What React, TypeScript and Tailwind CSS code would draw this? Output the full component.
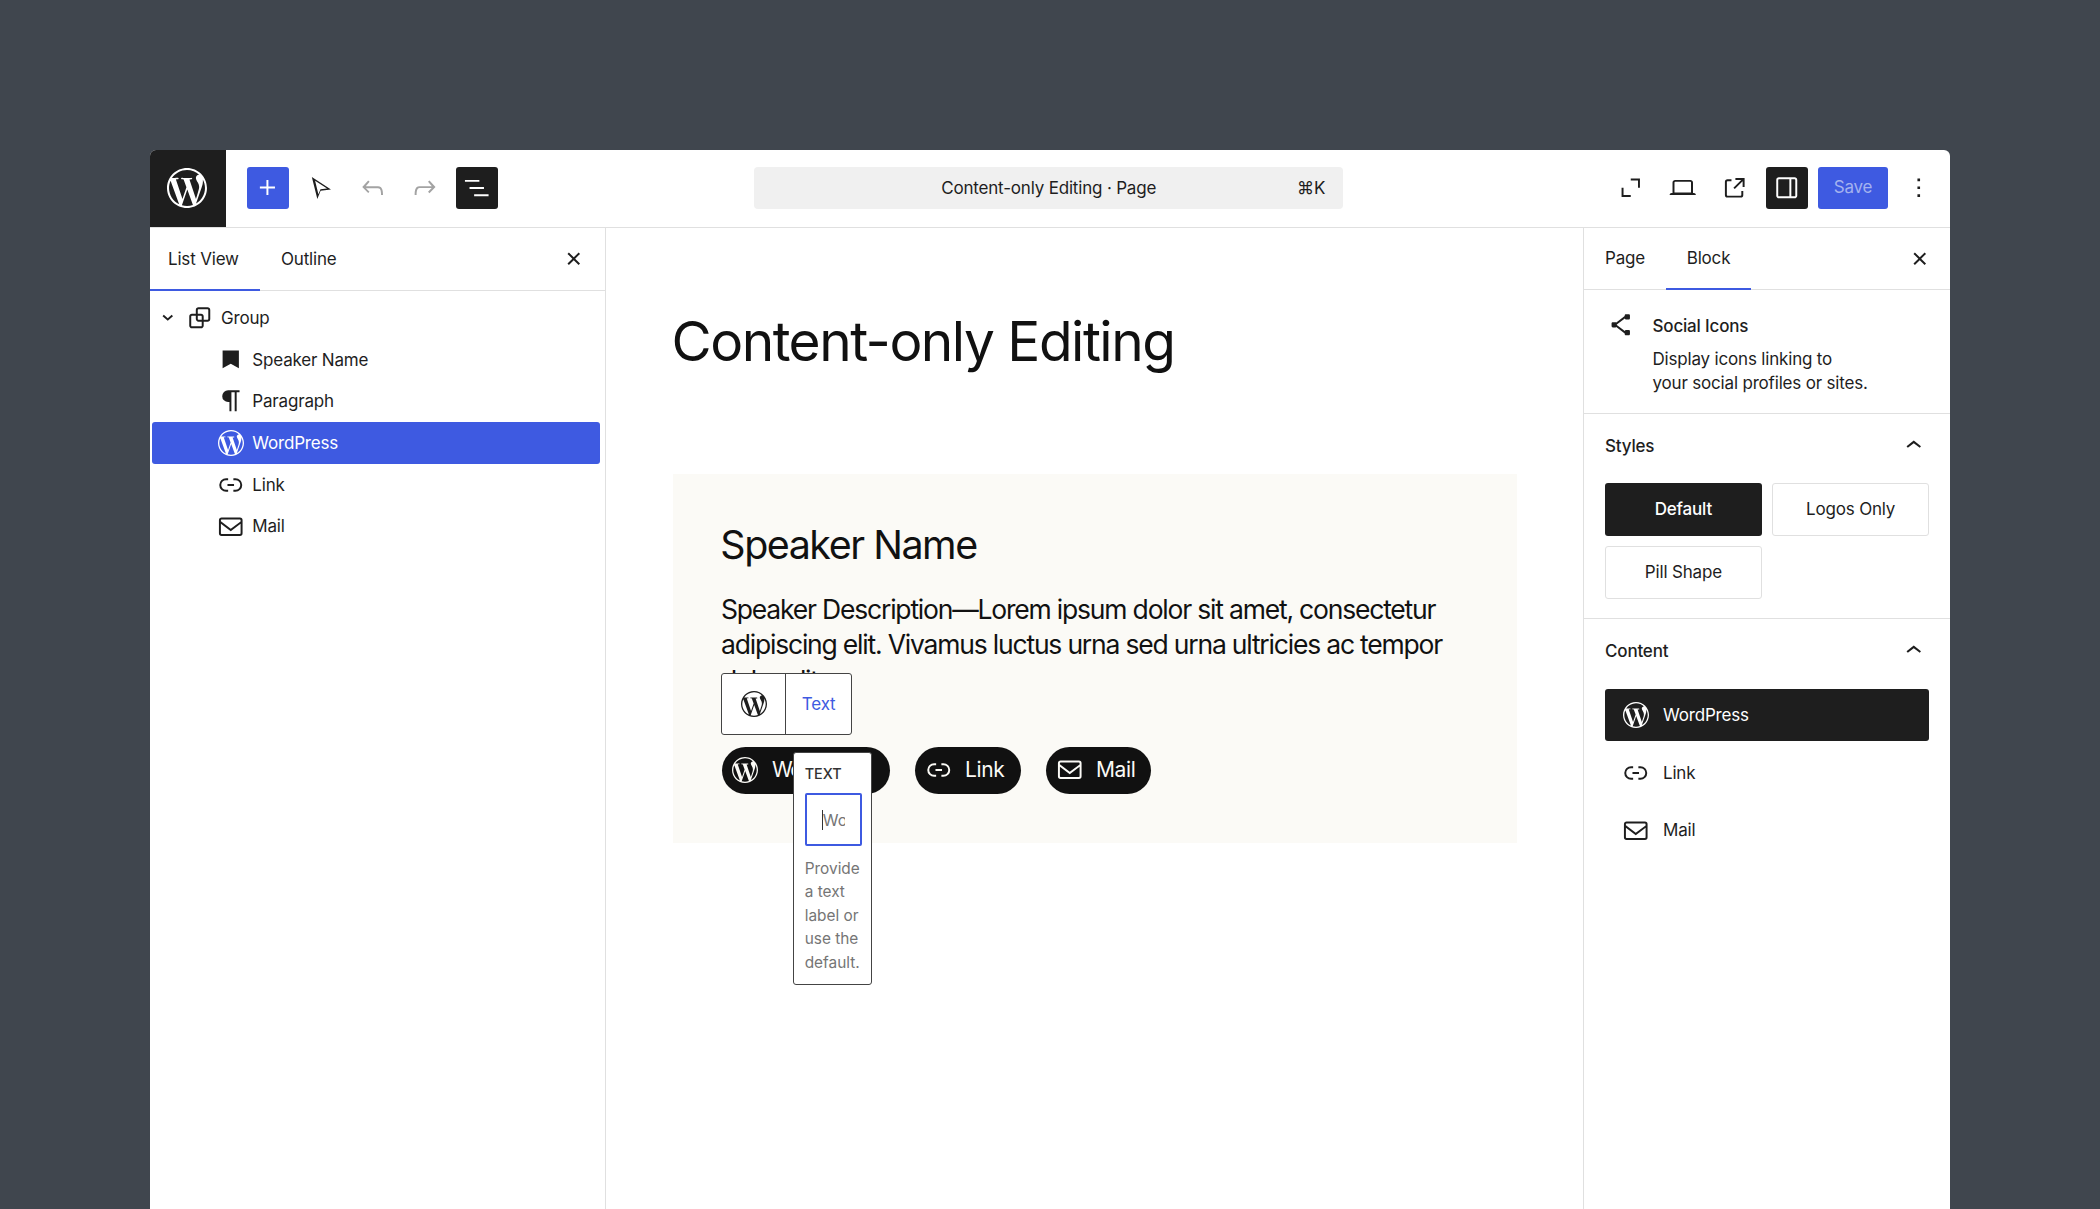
import React from "react";
import { SiWordpress } from "react-icons/si";

type IconProps = { d: string; className?: string };
const Icon = ({ d, className = "" }: IconProps) => (
  <svg viewBox="0 0 24 24" fill="currentColor" fillRule="evenodd" className={`w-[31.5px] h-[31.5px] shrink-0 ${className}`}>
    <path d={d} />
  </svg>
);

const P = {
  plus: "M11 12.5V17.5H12.5V12.5H17.5V11H12.5V6H11V11H6V12.5H11Z",
  cursor: "M9.4 20.5L5.2 3.8l14.6 9.5-7.9 1-2.5 6.2zM7.7 6.7l2.5 10.2 1.6-3.8 5-.6-9.1-5.8z",
  undo: "M18.3 11.7c-.6-.6-1.4-.9-2.3-.9H6.7l2.9-3.3-1.1-1-4.5 5L8.5 16l1-1-2.7-2.7H16c.5 0 .9.2 1.3.5 1 1 1 3.4 1 4.5v.3h1.5v-.2c0-1.5 0-4.3-1.5-5.7z",
  redo: "M15.6 6.5l-1.1 1 2.9 3.3H8c-.9 0-1.7.3-2.3.9-1.4 1.5-1.4 4.2-1.4 5.6v.2h1.5v-.3c0-1.1 0-3.5 1-4.5.3-.3.7-.5 1.3-.5h9.2L14.5 15l1.1 1.1 4.6-4.6-4.6-5z",
  list: "M3 6h11v1.5H3V6Zm3.5 5.5h11V13h-11v-1.5ZM21 17H10v1.5h11V17Z",
  close: "M12 13.06l3.712 3.713 1.061-1.06L13.061 12l3.712-3.712-1.06-1.06L12 10.938 8.288 7.227l-1.061 1.06L10.939 12l-3.712 3.712 1.06 1.061L12 13.061z",
  full: "M5 12h1.5v5.5H12V19H5v-7Z M19 12h-1.5V6.5H12V5h7v7Z",
  desktop: "M20.5 16h-.7V8c0-1.1-.9-2-2-2H6.2c-1.1 0-2 .9-2 2v8h-.7c-.8 0-1.5.7-1.5 1.5h20c0-.8-.7-1.5-1.5-1.5zM5.7 8c0-.3.2-.5.5-.5h11.6c.3 0 .5.2.5.5v7.6H5.7V8z",
  external: "M19.5 4.5h-7V6h4.44l-5.97 5.97 1.06 1.06L18 7.06v4.44h1.5v-7Zm-13 1a2 2 0 0 0-2 2v10a2 2 0 0 0 2 2h10a2 2 0 0 0 2-2v-3H17v3a.5.5 0 0 1-.5.5h-10a.5.5 0 0 1-.5-.5v-10a.5.5 0 0 1 .5-.5h3V5.5h-3Z",
  sidebar: "M18 4H6c-1.1 0-2 .9-2 2v12c0 1.1.9 2 2 2h12c1.1 0 2-.9 2-2V6c0-1.1-.9-2-2-2zm-4 14.5H6c-.3 0-.5-.2-.5-.5V6c0-.3.2-.5.5-.5h8v13zm4.5-.5c0 .3-.2.5-.5.5h-2.5v-13H18c.3 0 .5.2.5.5v12z",
  more: "M13 19h-2v-2h2v2zm0-6h-2v-2h2v2zm0-6h-2V5h2v2z",
  chevDown: "m15.99 10.889-3.988 3.418-3.988-3.418.976-1.14 3.012 2.582 3.012-2.581.976 1.139Z",
  chevUp: "M6.5 12.4L12 8l5.5 4.4-.9 1.2L12 10l-4.5 3.6-1-1.2z",
  group: "M18 4h-7c-1.1 0-2 .9-2 2v3H6c-1.1 0-2 .9-2 2v7c0 1.1.9 2 2 2h7c1.1 0 2-.9 2-2v-3h3c1.1 0 2-.7 2-2V6c0-1.1-.9-2-2-2zm-4.5 14c0 .3-.2.5-.5.5H6c-.3 0-.5-.2-.5-.5v-7c0-.3.2-.5.5-.5h3V13c0 1.1.9 2 2 2h2.5v3zm0-4.5H11c-.3 0-.5-.2-.5-.5v-2.5H13c.3 0 .5.2.5.5v2.5zm5-.5c0 .3-.2.5-.5.5h-3V11c0-1.1-.9-2-2-2h-2.5V6c0-.3.2-.5.5-.5h7c.3 0 .5.2.5.5v7z",
  bookmark: "M5.8 5h12.4v13.5L12 15l-6.2 3.5Z",
  para: "M10 4h8.7v1.5H16.5V20H15V5.5h-2.5V20H11v-7H10a4.5 4.5 0 0 1 0-9Z",
  link: "M10 17.389H8.444A5.194 5.194 0 1 1 8.444 7H10v1.5H8.444a3.694 3.694 0 0 0 0 7.389H10v1.5ZM14 7h1.556a5.194 5.194 0 0 1 0 10.39H14v-1.5h1.556a3.694 3.694 0 0 0 0-7.39H14V7Zm-4.5 6h5v-1.5h-5V13Z",
  mail: "M3 7c0-1.1.9-2 2-2h14a2 2 0 0 1 2 2v10a2 2 0 0 1-2 2H5a2 2 0 0 1-2-2V7Zm2-.5h14c.3 0 .5.2.5.5v1L12 13.5 4.5 7.9V7c0-.3.2-.5.5-.5Zm-.5 3.3V17c0 .3.2.5.5.5h14c.3 0 .5-.2.5-.5V9.8L12 15.4 4.5 9.8Z",
  share: "M9 11.8l6.1-4.5c.1.4.4.7.9.7h2c.6 0 1-.4 1-1V5c0-.6-.4-1-1-1h-2c-.6 0-1 .4-1 1v.4l-6.4 4.8c-.2-.1-.4-.2-.6-.2H6c-.6 0-1 .4-1 1v2c0 .6.4 1 1 1h2c.2 0 .4-.1.6-.2l6.4 4.8v.4c0 .6.4 1 1 1h2c.6 0 1-.4 1-1v-2c0-.6-.4-1-1-1h-2c-.5 0-.8.3-.9.7L9 12.2v-.4z",
};

const WP = ({ className = "" }: { className?: string }) => <SiWordpress className={`w-[26px] h-[26px] shrink-0 ${className}`} />;

const IconBtn = ({ d, className = "" }: { d: string; className?: string }) => (
  <div className={`w-[42px] h-[42px] rounded-[3px] flex items-center justify-center shrink-0 ${className}`}>
    <Icon d={d} />
  </div>
);

const Row = ({ icon, label, active }: { icon: React.ReactNode; label: string; active?: boolean }) => (
  <div className={`ml-[2.3px] mr-[5px] h-[41.7px] pl-[63px] flex items-center gap-[5.5px] rounded-[3px] ${active ? "bg-[#3e5ae1] text-white" : ""}`}>
    {icon}
    <span className="pt-[1.5px]">{label}</span>
  </div>
);

const Pill = ({ icon, label, className = "" }: { icon: React.ReactNode; label: string; className?: string }) => (
  <div className={`h-[47px] rounded-full bg-[#111111] text-[#fbfaf6] flex items-center text-[21px] ${className}`}>
    {icon}
    <span>{label}</span>
  </div>
);

export default function App() {
  return (
    <div className="w-full h-screen bg-[#40464e] pt-[150px] px-[150px] overflow-hidden font-[Inter,sans-serif] text-[17px] tracking-[-0.18px] text-[#1e1e1e] antialiased">
      <div className="h-full bg-white rounded-t-[6px] overflow-hidden flex flex-col">
        <header className="h-[78px] shrink-0 border-b border-[#e0e0e0] flex items-center">
          <div className="w-[76px] h-full bg-[#1e1e1e] text-white flex items-center justify-center shrink-0 pr-[3px] pb-[1px]">
            <SiWordpress className="w-[40px] h-[40px]" />
          </div>
          <div className="ml-[21px] mb-[2px] flex items-center gap-[10.3px]">
            <IconBtn d={P.plus} className="bg-[#3e5ae1] text-white" />
            <IconBtn d={P.cursor} />
            <IconBtn d={P.undo} className="text-[#a3a3a3]" />
            <IconBtn d={P.redo} className="text-[#a3a3a3]" />
            <IconBtn d={P.list} className="bg-[#1e1e1e] text-white" />
          </div>
          <div className="ml-[256px] mb-[2px] w-[589px] h-[42px] shrink-0 rounded-[4px] bg-[#f0f0f0] relative flex items-center justify-center">
            <span className="pt-[2.5px]">Content-only Editing · Page</span>
            <span className="absolute right-[18px] pt-[2.5px]">⌘K</span>
          </div>
          <div className="ml-auto mr-[10px] mb-[2px] flex items-center gap-[10px]">
            <IconBtn d={P.full} />
            <IconBtn d={P.desktop} />
            <IconBtn d={P.external} />
            <IconBtn d={P.sidebar} className="bg-[#1e1e1e] text-white" />
            <div className="w-[70px] h-[42px] rounded-[3px] bg-[#3e5ae1] text-[#a4b2ef] flex items-center justify-center pt-[1px]">Save</div>
            <IconBtn d={P.more} />
          </div>
        </header>

        <div className="flex-1 flex min-h-0">
          <aside className="w-[456px] shrink-0 border-r border-[#e0e0e0]">
            <div className="h-[63px] border-b border-[#e0e0e0] flex items-center relative">
              <div className="w-[110px] h-full pl-[18px] pt-[2px] flex items-center border-b-2 border-[#3e5ae1] -mb-px">List View</div>
              <div className="pl-[21px] pt-[2px]">Outline</div>
              <Icon d={P.close} className="ml-auto mr-[16px]" />
            </div>
            <div className="pt-[6px]">
              <div className="ml-[2.3px] mr-[5px] h-[41.7px] flex items-center">
                <Icon d={P.chevDown} />
                <Icon d={P.group} />
                <span className="ml-[5.7px] pt-[1.5px]">Group</span>
              </div>
              <Row icon={<Icon d={P.bookmark} />} label="Speaker Name" />
              <Row icon={<Icon d={P.para} />} label="Paragraph" />
              <Row icon={<WP className="mx-[2.75px]" />} label="WordPress" active />
              <Row icon={<Icon d={P.link} />} label="Link" />
              <Row icon={<Icon d={P.mail} />} label="Mail" />
            </div>
          </aside>

          <main className="flex-1 min-w-0 pt-[80px] pl-[66.5px] pr-[66.5px]">
            <h1 className="-ml-[1px] text-[55px] leading-[66px] text-[#111111] tracking-[-1.5px] whitespace-nowrap">Content-only Editing</h1>
            <section className="relative mt-[100px] bg-[#fbfaf6] pt-[49px] pb-[49px] pl-[48.5px] pr-[40px] text-[#111111]">
              <h2 className="-ml-[0.7px] text-[39.4px] leading-[47px] tracking-[-1.45px] -mt-[1px]">Speaker Name</h2>
              <p className="mt-[22.5px] text-[26.5px] leading-[35.5px] tracking-[-1.2px]">
                Speaker Description—Lorem ipsum dolor sit amet, consectetur adipiscing elit. Vivamus luctus urna sed urna ultricies ac tempor dolor elit.
              </p>
              <div className="ml-[1px] mt-[48.5px] flex items-center gap-[25px]">
                <Pill className="w-[168px] pl-[10px] gap-[14px] tracking-[-1.3px]" icon={<WP />} label="WordPress" />
                <Pill className="w-[106px] pl-[7.5px] gap-[11px] tracking-[-0.4px]" icon={<Icon d={P.link} />} label="Link" />
                <Pill className="w-[105px] pl-[7.5px] gap-[11px] tracking-[-0.4px]" icon={<Icon d={P.mail} />} label="Mail" />
              </div>

              <div className="absolute left-[48.7px] top-[199px] w-[131px] h-[62px] bg-white border-[1.3px] border-[#444444] rounded-[3px] flex">
                <div className="w-[64px] border-r-[1.3px] border-[#444444] flex items-center justify-center text-[#1e1e1e]">
                  <WP />
                </div>
                <div className="flex-1 flex items-center justify-center pt-[2px] text-[#3e5ae1] text-[17px] tracking-[-0.18px]">Text</div>
              </div>

              <div className="absolute left-[120.7px] top-[278.3px] w-[79px] h-[233px] bg-white border-[1.3px] border-[#444444] rounded-[3px] pl-[10.5px] pt-[12px] text-[17px] tracking-normal">
                <div className="text-[14.4px] leading-[18px] font-medium text-[#333333]">TEXT</div>
                <div className="mt-[10px] w-[57px] h-[53px] border-2 border-[#3e5ae1] rounded-[2px] flex items-center overflow-hidden pl-[15px]">
                  <span className="w-[1px] h-[20px] bg-[#333333] shrink-0" />
                  <span className="text-[#757575] text-[16px] whitespace-nowrap overflow-hidden w-[22px]">Wo</span>
                </div>
                <p className="mt-[10.5px] text-[#757575] text-[15.4px] leading-[23.5px] w-[60px]">Provide a text label or use the default.</p>
              </div>
            </section>
          </main>

          <aside className="w-[367px] shrink-0 border-l border-[#e0e0e0]">
            <div className="h-[62px] border-b border-[#e0e0e0] flex items-center">
              <div className="pl-[21px] w-[82px] pt-[1px]">Page</div>
              <div className="w-[85px] h-full pt-[1px] flex items-center justify-center border-b-2 border-[#3e5ae1] -mb-px">Block</div>
              <Icon d={P.close} className="ml-auto mr-[15px]" />
            </div>
            <div className="border-b border-[#e0e0e0] pl-[21px] pt-[19px] pb-[19px] flex items-start gap-[16px]">
              <Icon d={P.share} />
              <div className="pt-[5px] leading-[24px]">
                <div className="font-medium">Social Icons</div>
                <div className="mt-[9px] -mb-[1px]">Display icons linking to<br />your social profiles or sites.</div>
              </div>
            </div>
            <div className="border-b border-[#e0e0e0] pt-[16px] pb-[19.5px] px-[21px]">
              <div className="h-[32px] flex items-center justify-between font-medium">
                <span className="pt-[2px]">Styles</span>
                <Icon d={P.chevUp} />
              </div>
              <div className="mt-[21px] grid grid-cols-2 gap-[10.5px]">
                <div className="h-[52.5px] pt-[1px] rounded-[3px] bg-[#1e1e1e] text-white flex items-center justify-center font-medium">Default</div>
                <div className="h-[52.5px] pt-[1px] rounded-[3px] border-[1.3px] border-[#e0e0e0] flex items-center justify-center">Logos Only</div>
                <div className="h-[52.5px] pt-[1px] rounded-[3px] border-[1.3px] border-[#e0e0e0] flex items-center justify-center">Pill Shape</div>
              </div>
            </div>
            <div className="pt-[15.5px] px-[21px]">
              <div className="h-[32px] flex items-center justify-between font-medium">
                <span className="pt-[2px]">Content</span>
                <Icon d={P.chevUp} />
              </div>
              <div className="mt-[22px] flex flex-col gap-[5px]">
                <div className="h-[52.5px] rounded-[3px] bg-[#1e1e1e] text-white flex items-center pl-[18px] gap-[14px]">
                  <WP />
                  <span className="pt-[1.5px]">WordPress</span>
                </div>
                <div className="h-[53px] flex items-center pl-[15px] gap-[11.5px]">
                  <Icon d={P.link} />
                  <span className="pt-[1.5px]">Link</span>
                </div>
                <div className="h-[53px] flex items-center pl-[15px] gap-[11.5px]">
                  <Icon d={P.mail} />
                  <span className="pt-[1px]">Mail</span>
                </div>
              </div>
            </div>
          </aside>
        </div>
      </div>
    </div>
  );
}
